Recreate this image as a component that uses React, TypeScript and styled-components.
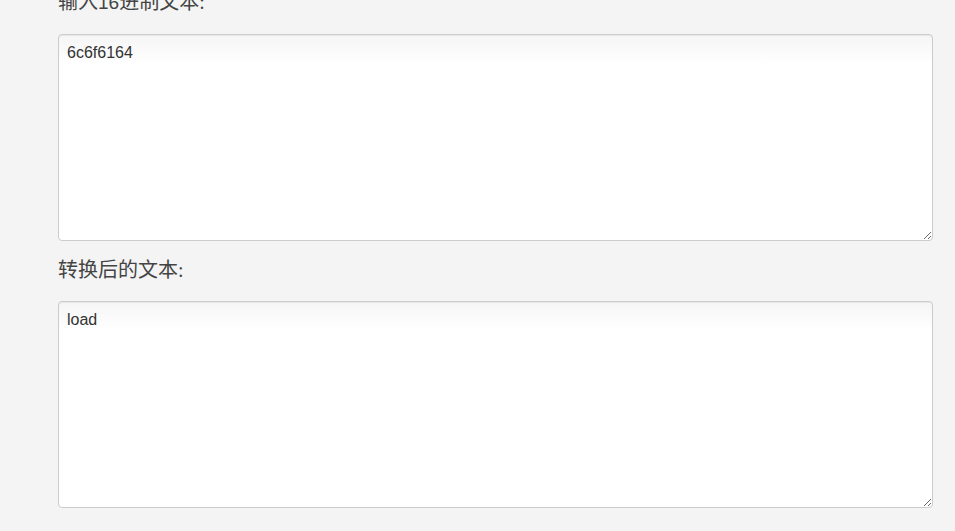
import styled, { createGlobalStyle } from "styled-components";

const GlobalStyle = createGlobalStyle`
  html, body {
    margin: 0;
    padding: 0;
    background-color: #f4f4f4;
    overflow: hidden;
  }
`;

const Page = styled.div`
  display: flex;
  flex-direction: column;
  margin-top: -27px;
  padding: 0 23px 0 58px;
`;

const Label = styled.label`
  display: block;
  margin: 19px 0 21px;
  font-family: "Liberation Serif", "Noto Sans CJK SC", serif;
  font-size: 20px;
  line-height: 20px;
  color: #444;
`;

const Num = styled.span`
  font-family: "Liberation Sans", Arial, sans-serif;
  font-size: 19px;
`;

const TextBox = styled.textarea`
  box-sizing: border-box;
  width: 875px;
  height: 207px;
  padding: 8px 8px 6px;
  border: 1px solid #cccccc;
  border-radius: 4px;
  background: linear-gradient(#f5f5f5, #ffffff 28px);
  box-shadow: inset 0 1px 1px rgba(0, 0, 0, 0.06);
  font-family: "Liberation Sans", Arial, sans-serif;
  font-size: 16px;
  line-height: 20px;
  color: #333;
  outline: none;
`;

export default function App() {
  return (
    <>
      <GlobalStyle />
      <Page>
        <Label htmlFor="hex">
          输入<Num>16</Num>进制文本:
        </Label>
        <TextBox id="hex" defaultValue="6c6f6164" spellCheck={false} />
        <Label htmlFor="out">转换后的文本:</Label>
        <TextBox id="out" defaultValue="load" spellCheck={false} />
      </Page>
    </>
  );
}
